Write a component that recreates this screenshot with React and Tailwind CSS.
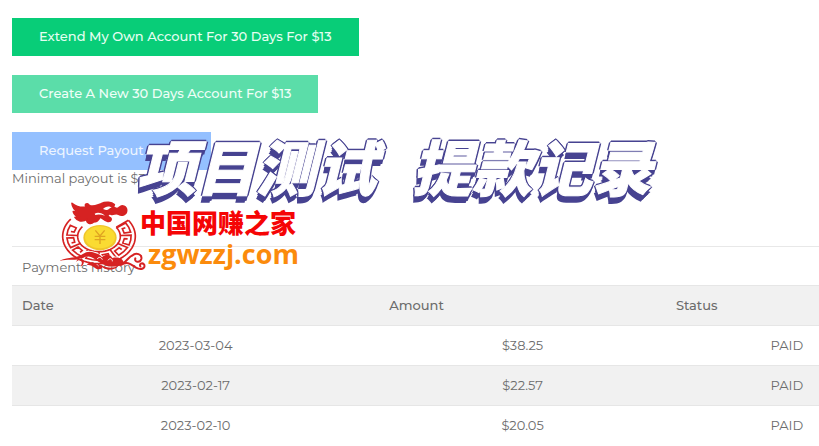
const payments = [
  { date: '2023-03-04', amount: '$38.25', status: 'PAID' },
  { date: '2023-02-17', amount: '$22.57', status: 'PAID' },
  { date: '2023-02-10', amount: '$20.05', status: 'PAID' },
];

// point on the ring band, t = 0 on the inner edge and 1 on the outer edge
const ringPoint = (deg, t) => {
  const a = (deg * Math.PI) / 180;
  const x = 147 + (64 + 45 * t) * Math.cos(a);
  const y = 139 + (46 + 36 * t) * Math.sin(a);
  return `${x.toFixed(1)} ${y.toFixed(1)}`;
};

const line = (points) => 'M' + points.map(([deg, t]) => ringPoint(deg, t)).join(' L');

// one square spiral of the meander pattern
const fret = (start) =>
  line([
    [start, 0], [start, 0.72], [start + 12, 0.72], [start + 24, 0.72], [start + 24, 0.28],
    [start + 10, 0.28], [start + 10, 0.5],
  ]);

const frets = [-34, -3, 28, 59, 90, 121, 152, 183].map(fret);

const arc = (from, to, t) => {
  const points = [];
  for (let deg = from; deg <= to; deg += 5) points.push([deg, t]);
  return line(points);
};

const DragonLogo = () => (
  <svg viewBox="30 30 264 219" className="w-[88px] h-[73px] shrink-0" aria-hidden="true">
    <g fill="none" stroke="#d62222" strokeWidth="5">
      {frets.map((d) => (
        <path key={d} d={d} />
      ))}
      <path d={arc(-36, 220, 1)} />
      <path d={arc(-36, 220, 0)} />
      <path d={line([[-36, 0], [-36, 1]])} />
    </g>
    <ellipse cx="150" cy="143" rx="50" ry="38" fill="#f0c52c" />
    <ellipse cx="150" cy="142" rx="45" ry="33" fill="#fadb32" />
    <path
      d="M136 121 L150 138 L164 121 M150 138 V162 M134 139 H166 M134 149 H166"
      fill="none"
      stroke="#dfa322"
      strokeWidth="4"
    />
    <path
      d="M66 40 C78 49 91 55 109 51 C102 45 110 37 117 45 C127 54 139 46 153 41 C169 34 185 37 193 44 L190 51 C198 57 205 57 209 51 C216 43 230 49 230 61 C230 74 216 79 206 73 C198 67 192 75 184 73 C175 70 169 76 178 82 C187 86 184 96 173 94 C165 93 158 86 151 81 C145 88 145 96 131 96 C122 105 108 99 111 88 C97 97 82 93 75 82 L88 79 C79 78 72 72 70 65 L84 67 C73 59 67 50 66 40Z"
      fill="#d62222"
      stroke="#d62222"
      strokeWidth="5"
      strokeLinejoin="round"
    />
    <path d="M159 57 C166 48 179 47 185 53 C177 53 176 61 168 60Z" fill="#fff" />
    <path d="M134 71 C144 65 157 70 165 77 C154 73 143 72 136 75Z" fill="#fff" />
    <path d="M97 186 C120 176 140 186 158 198 C185 190 200 200 222 216 C204 238 174 230 158 218 C132 204 118 197 97 200Z" fill="#fff" />
    <path
      d="M78 216 C91 202 103 219 90 229 C97 229 105 219 100 211 C94 202 83 204 78 216Z M27 213 C56 199 77 207 97 193 C118 179 134 185 158 205 C179 222 197 226 218 217 C198 233 178 233 157 222 C132 208 122 191 99 204 C78 214 54 205 27 213Z"
      fill="#d62222"
    />
    <path
      d="M115 197 C133 183 151 193 156 202 C165 190 182 192 187 204 C203 200 218 204 222 219 C204 238 174 228 158 216 C142 206 134 198 115 197Z M110 224 C123 211 138 219 147 231 L142 219 C158 230 181 239 205 228 C193 242 171 243 157 232 C153 242 138 238 130 230 C123 224 117 225 110 224Z"
      fill="#d62222"
    />
    <path
      d="M218 221 C231 213 236 201 247 196 M246 197 C258 186 277 192 274 207 C270 220 252 217 256 205 M213 225 C235 211 245 226 258 233 C274 242 288 234 282 223 C276 217 267 222 271 229"
      fill="none"
      stroke="#d62222"
      strokeWidth="6"
      strokeLinecap="round"
    />
    <path
      d="M142 207 C146 199 155 202 157 209 M174 211 C179 202 188 207 187 214"
      fill="none"
      stroke="#fff"
      strokeWidth="3"
    />
  </svg>
);

const Watermark = () => (
  <div className="absolute left-[60px] top-[200px] flex items-start">
    <DragonLogo />
    <div className="-ml-2 flex flex-col whitespace-nowrap">
      <span className="mt-1 text-[26px] leading-9 font-black text-[#f50505] font-['Noto_Sans_CJK_SC',sans-serif]">
        中国网赚之家
      </span>
      <span className="ml-2 text-[27px] leading-7 font-bold text-[#fb8b0c] font-['Open_Sans',sans-serif]">
        zgwzzj.com
      </span>
    </div>
  </div>
);

const Headline = () => (
  <h1 className="absolute left-[136px] top-[130px] flex gap-9 whitespace-nowrap text-[60px] leading-[70px] font-black italic text-white font-['Noto_Sans_CJK_SC',sans-serif] [-webkit-text-stroke:1px_#fff] [text-shadow:2px_0_0_#474391,-2px_0_0_#474391,0_-2px_0_#474391,0_2px_0_#474391,1px_1px_0_#474391,-1px_-1px_0_#474391,1px_-1px_0_#474391,-1px_3px_0_#474391,-1px_5px_0_#474391,-2px_7px_0_#474391,0_5px_0_#474391]">
    <span>项目测试</span>
    <span>提款记录</span>
  </h1>
);

const App = () => {
  return (
    <div className="relative overflow-hidden bg-white pl-3 pt-[18px] text-[13px] text-[#6c6c6c] font-['Montserrat','Inter',sans-serif]">
      <div className="flex flex-col items-start gap-[19px] font-medium">
        <button type="button" className="h-[38px] px-[27px] bg-[#08cd78] text-[#e5fff2]">
          Extend My Own Account For 30 Days For $13
        </button>
        <button type="button" className="h-[38px] px-[27px] bg-[#5bdda9] text-[#effff8]">
          Create A New 30 Days Account For $13
        </button>
        <button type="button" className="h-[38px] pl-[27px] pr-[67px] bg-[#94c0ff] text-[#edf5ff]">
          Request Payout
        </button>
      </div>
      <p className="leading-4">Minimal payout is $3</p>

      <table className="mt-[60px] w-[111%] table-fixed border-collapse">
        <caption className="h-[39px] border-t border-[#e8e8e8] pl-[10px] text-left leading-10">
          Payments history
        </caption>
        <colgroup>
          <col className="w-[41%]" />
          <col className="w-[32%]" />
          <col className="w-[27%]" />
        </colgroup>
        <thead>
          <tr className="h-10 border-y border-[#e6e6e6] bg-[#f1f1f1] text-left">
            <th className="px-[10px] font-medium">Date</th>
            <th className="px-[10px] font-medium">Amount</th>
            <th className="px-[10px] font-medium">Status</th>
          </tr>
        </thead>
        <tbody>
          {payments.map((payment) => (
            <tr
              key={payment.date}
              className="h-10 border-b border-[#e6e6e6] text-center last:border-b-0 even:bg-[#f1f1f1]"
            >
              <td>{payment.date}</td>
              <td>{payment.amount}</td>
              <td>{payment.status}</td>
            </tr>
          ))}
        </tbody>
      </table>

      <Headline />
      <Watermark />
    </div>
  );
};

export default App;
